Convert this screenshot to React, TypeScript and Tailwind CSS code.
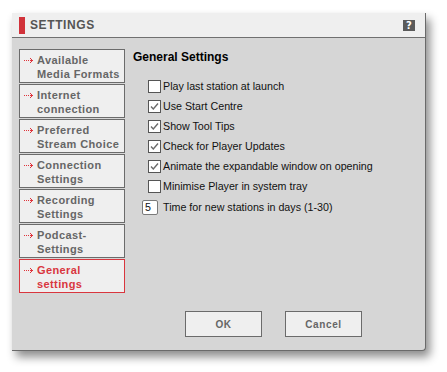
import React from "react";

const menu = [
  ["Available", "Media Formats"],
  ["Internet", "connection"],
  ["Preferred", "Stream Choice"],
  ["Connection", "Settings"],
  ["Recording", "Settings"],
  ["Podcast-", "Settings"],
  ["General", "settings"],
];

const options = [
  { label: "Play last station at launch", checked: false },
  { label: "Use Start Centre", checked: true },
  { label: "Show Tool Tips", checked: true },
  { label: "Check for Player Updates", checked: true },
  { label: "Animate the expandable window on opening", checked: true },
  { label: "Minimise Player in system tray", checked: false },
];

function Arrow() {
  return (
    <svg width="10" height="7" viewBox="0 0 10 7" className="mt-[4px] shrink-0">
      <g fill="#e0323a">
        <rect x="0" y="3" width="1" height="1" />
        <rect x="2" y="3" width="1" height="1" />
        <rect x="4" y="3" width="1" height="1" />
        <rect x="6" y="3" width="2" height="1" />
        <rect x="6" y="1" width="1" height="1" />
        <rect x="7" y="2" width="1" height="1" />
        <rect x="8" y="3" width="1" height="1" />
        <rect x="7" y="4" width="1" height="1" />
        <rect x="6" y="5" width="1" height="1" />
      </g>
    </svg>
  );
}

function Check({ checked }: { checked: boolean }) {
  return (
    <span className="w-[13px] h-[13px] border border-[#555] bg-white flex items-center justify-center shrink-0">
      {checked && (
        <svg width="9" height="9" viewBox="0 0 9 9">
          <path d="M1 4.5 L3.3 7 L8 1.5" stroke="#6a6a6a" strokeWidth="1.4" fill="none" />
        </svg>
      )}
    </span>
  );
}

export default function App() {
  return (
    <div className="w-[447px] h-[372px] bg-white pl-[12px] pt-[13px]">
      <div className="w-[414px] h-[338px] flex flex-col bg-[#d6d6d6] border-r border-b border-[#6a6a6a] rounded-br-[4px] shadow-[4px_6px_10px_rgba(0,0,0,0.45)]">
        <div className="h-[25px] bg-[#efefef] border-b border-[#707070] flex items-center pl-[7px] pr-[10px]">
          <span className="w-[6px] h-[17px] bg-[#d1323a]" />
          <span className="ml-[5px] text-[12px] font-bold tracking-[0.6px] text-[#555] font-['Liberation_Sans',sans-serif]">
            SETTINGS
          </span>
          <span className="ml-auto w-[12px] h-[11px] bg-[#5a5a5a] text-white text-[10px] font-bold leading-[11px] text-center font-['DejaVu_Sans',sans-serif]">
            ?
          </span>
        </div>
        <div className="flex-1 flex pl-[7px] pt-[11px]">
          <div className="flex flex-col gap-[1px] w-[106px]">
            {menu.map(([a, b], i) => {
              const active = i === menu.length - 1;
              return (
                <div
                  key={a}
                  className={`h-[34px] border bg-[#efefef] flex pl-[4px] pt-[3px] gap-[3px] ${
                    active ? "border-[#d9363e] text-[#d9363e]" : "border-[#6b6b6b] text-[#666]"
                  }`}
                >
                  <Arrow />
                  <div className="text-[11px] font-bold leading-[14px] tracking-[0.4px] whitespace-nowrap font-['Liberation_Sans',sans-serif]">
                    <div>{a}</div>
                    <div>{b}</div>
                  </div>
                </div>
              );
            })}
          </div>
          <div className="ml-[8px] font-['Liberation_Sans',sans-serif] text-black">
            <div className="text-[12px] font-bold leading-[14px] mt-[1px]">General Settings</div>
            <div className="mt-[16px] ml-[15px] flex flex-col gap-[7px]">
              {options.map((o) => (
                <div key={o.label} className="flex items-center gap-[2px] h-[13px] text-[10.7px] text-[#111] whitespace-nowrap">
                  <Check checked={o.checked} />
                  <span>{o.label}</span>
                </div>
              ))}
            </div>
            <div className="mt-[6px] ml-[9px] flex items-center gap-[5px] text-[10.7px] text-[#111] whitespace-nowrap">
              <span className="w-[16px] h-[15px] bg-white border border-[#7a7a7a] rounded-[2px] pl-[2px] leading-[13px]">5</span>
              <span>Time for new stations in days (1-30)</span>
            </div>
          </div>
        </div>
        <div className="h-[39px] flex justify-end gap-[23px] pr-[63px] pb-[13px]">
          <button className="w-[77px] h-[26px] bg-[#efefef] border border-[#6b6b6b] text-[#666] text-[10px] font-bold tracking-[0.6px] font-['Liberation_Sans',sans-serif]">
            OK
          </button>
          <button className="w-[77px] h-[26px] bg-[#efefef] border border-[#6b6b6b] text-[#666] text-[10px] font-bold tracking-[0.6px] font-['Liberation_Sans',sans-serif]">
            Cancel
          </button>
        </div>
      </div>
    </div>
  );
}
